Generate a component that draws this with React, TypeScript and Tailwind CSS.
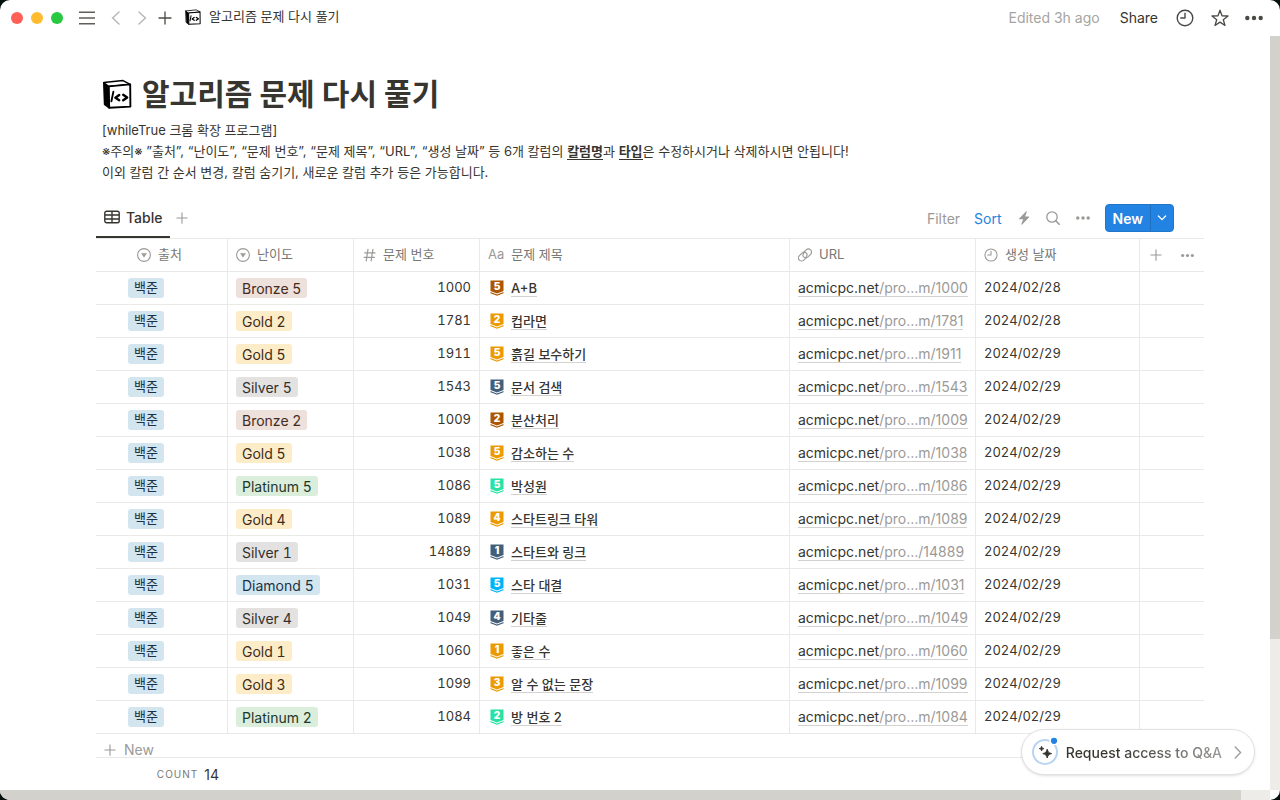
import type { ReactNode } from "react";

type Tier = "Bronze" | "Silver" | "Gold" | "Platinum" | "Diamond";

interface Problem {
  tier: Tier;
  level: number;
  id: number;
  title: string;
  date: string;
}

const problems: Problem[] = [
  { tier: "Bronze", level: 5, id: 1000, title: "A+B", date: "2024/02/28" },
  { tier: "Gold", level: 2, id: 1781, title: "컵라면", date: "2024/02/28" },
  { tier: "Gold", level: 5, id: 1911, title: "흙길 보수하기", date: "2024/02/29" },
  { tier: "Silver", level: 5, id: 1543, title: "문서 검색", date: "2024/02/29" },
  { tier: "Bronze", level: 2, id: 1009, title: "분산처리", date: "2024/02/29" },
  { tier: "Gold", level: 5, id: 1038, title: "감소하는 수", date: "2024/02/29" },
  { tier: "Platinum", level: 5, id: 1086, title: "박성원", date: "2024/02/29" },
  { tier: "Gold", level: 4, id: 1089, title: "스타트링크 타워", date: "2024/02/29" },
  { tier: "Silver", level: 1, id: 14889, title: "스타트와 링크", date: "2024/02/29" },
  { tier: "Diamond", level: 5, id: 1031, title: "스타 대결", date: "2024/02/29" },
  { tier: "Silver", level: 4, id: 1049, title: "기타줄", date: "2024/02/29" },
  { tier: "Gold", level: 1, id: 1060, title: "좋은 수", date: "2024/02/29" },
  { tier: "Gold", level: 3, id: 1099, title: "알 수 없는 문장", date: "2024/02/29" },
  { tier: "Platinum", level: 2, id: 1084, title: "방 번호 2", date: "2024/02/29" },
];

const tagStyles: Record<Tier, string> = {
  Bronze: "bg-[#eee0da] text-[#442a1e]",
  Silver: "bg-[#e3e2e0] text-[#32302c]",
  Gold: "bg-[#fdecc8] text-[#402c1b]",
  Platinum: "bg-[#dbeddb] text-[#1c3829]",
  Diamond: "bg-[#d3e5ef] text-[#183347]",
};

const tierColors: Record<Tier, string> = {
  Bronze: "#ad5600",
  Silver: "#435f7a",
  Gold: "#ec9a00",
  Platinum: "#27e2a4",
  Diamond: "#00b4fc",
};

function Tag({ className, children }: { className: string; children: ReactNode }) {
  return <span className={`inline-flex h-5 items-center rounded-[3px] px-1.5 ${className}`}>{children}</span>;
}

function TierBadge({ tier, level }: { tier: Tier; level: number }) {
  const color = tierColors[tier];
  return (
    <svg width="14" height="16" viewBox="0 0 14 16" className="shrink-0" aria-hidden="true">
      <path d="M.5.5h13v10.6L7 13.6.5 11.1Z" fill={color} />
      <path d="M.5 12 7 14.6l6.5-2.6v1.2L7 15.8.5 13.2Z" fill={color} />
      <text x="7" y="10.2" textAnchor="middle" fontSize="10" fontWeight="900" fill="#fff" className="font-['Inter',sans-serif]">
        {level}
      </text>
    </svg>
  );
}

function Plus({ size, className }: { size: number; className: string }) {
  return (
    <svg width={size} height={size} viewBox="0 0 14 14" className={className} fill="none" stroke="currentColor" strokeWidth="1.3" strokeLinecap="round" aria-hidden="true">
      <path d="M7 1v12M1 7h12" />
    </svg>
  );
}

function Dots({ size }: { size: number }) {
  return (
    <svg width={size} height={size} viewBox="0 0 18 18" fill="currentColor" aria-hidden="true">
      <circle cx="2.3" cy="9" r="2.2" />
      <circle cx="9" cy="9" r="2.2" />
      <circle cx="15.7" cy="9" r="2.2" />
    </svg>
  );
}

function Clock({ size }: { size: number }) {
  return (
    <svg width={size} height={size} viewBox="0 0 18 18" fill="none" stroke="currentColor" strokeWidth="1.4" aria-hidden="true">
      <circle cx="9" cy="9" r="7.8" />
      <path d="M9 4.2V9H4.8" strokeLinecap="round" strokeLinejoin="round" />
    </svg>
  );
}

function SelectIcon() {
  return (
    <svg width="14" height="14" viewBox="0 0 14 14" aria-hidden="true">
      <circle cx="7" cy="7" r="6.4" fill="none" stroke="currentColor" strokeWidth="1.1" />
      <path d="M4.5 5.4h5L7 9.3Z" fill="currentColor" stroke="currentColor" strokeWidth=".5" strokeLinejoin="round" />
    </svg>
  );
}

function HashIcon() {
  return (
    <svg width="14" height="14" viewBox="0 0 14 14" fill="none" stroke="currentColor" strokeWidth="1.2" strokeLinecap="round" aria-hidden="true">
      <path d="M6 1.4 4.2 12.8M10.9 1.4 9.1 12.8M2.7 4.9h10.4M2.1 9.3h10.4" />
    </svg>
  );
}

function LinkIcon() {
  return (
    <svg width="14" height="14" viewBox="0 0 14 14" fill="none" stroke="currentColor" strokeWidth="1.15" strokeLinecap="round" aria-hidden="true">
      <path d="M5.9 4.2 8.2 1.9a3.1 3.1 0 0 1 4.4 4.4L10 8.9a3.1 3.1 0 0 1-4.4 0 2.6 2.6 0 0 1 .2-3.5" />
      <path d="M8.1 9.8 5.8 12.1a3.1 3.1 0 0 1-4.4-4.4L4 5.1a3.1 3.1 0 0 1 4.4 0 2.6 2.6 0 0 1-.2 3.5" />
    </svg>
  );
}

function CodeCube({ size }: { size: number }) {
  return (
    <svg width={size} height={size} viewBox="0 0 30 30" className="shrink-0" fill="none" stroke="#000" strokeLinecap="round" strokeLinejoin="round" aria-hidden="true">
      <path d="M1.8 3.8 6.8 7.4 7.2 28.8 2.6 25.4Z" fill="#000" strokeWidth="1.6" />
      <path d="M1.8 3.6 21 1.6 28.2 5.4 6.8 7.6Z" fill="#fff" strokeWidth="1.5" />
      <path d="M6.8 7.4 28.2 5.4 28.4 27.6 7.2 28.8Z" fill="#fff" strokeWidth="1.9" />
      <path d="M11.4 12.6 9.4 22.2" strokeWidth="1.9" />
      <path d="m17.2 16-3.8 2.8 3.8 2.4M21.2 15.8l4 2.6-4 2.8" strokeWidth="2.4" />
    </svg>
  );
}

function TableIcon() {
  return (
    <svg width="16" height="14" viewBox="0 0 16 14" fill="none" stroke="currentColor" strokeWidth="1.4" aria-hidden="true">
      <rect x=".8" y="1.2" width="14.4" height="11.6" rx="1.8" />
      <path d="M1 5h14M1 9h14M8 1.5v11" />
    </svg>
  );
}

function TopBar() {
  return (
    <header className="flex h-9 shrink-0 items-center justify-between pl-[11px] pr-[17px] text-[14px]">
      <div className="flex items-center">
        <div className="flex gap-2" aria-hidden="true">
          <span className="size-3 rounded-full bg-[#ff5f57]" />
          <span className="size-3 rounded-full bg-[#febc2e]" />
          <span className="size-3 rounded-full bg-[#28c840]" />
        </div>
        <button type="button" aria-label="Menu" className="ml-4 text-[#5f5e5b]">
          <svg width="16" height="14" viewBox="0 0 16 14" stroke="currentColor" strokeWidth="1.5" aria-hidden="true">
            <path d="M0 1.2h16M0 7h16M0 12.8h16" />
          </svg>
        </button>
        <button type="button" aria-label="Back" className="ml-4 text-[#b9b8b6]">
          <svg width="10" height="14" viewBox="0 0 10 14" fill="none" stroke="currentColor" strokeWidth="1.5" strokeLinecap="round" aria-hidden="true">
            <path d="M8 1 1.6 7 8 13" />
          </svg>
        </button>
        <button type="button" aria-label="Forward" className="ml-4 text-[#b9b8b6]">
          <svg width="10" height="14" viewBox="0 0 10 14" fill="none" stroke="currentColor" strokeWidth="1.5" strokeLinecap="round" aria-hidden="true">
            <path d="M2 1l6.4 6L2 13" />
          </svg>
        </button>
        <button type="button" aria-label="New tab" className="ml-[11px]">
          <Plus size={14} className="text-[#4a4946]" />
        </button>
        <a href="#page" className="ml-[13px] flex items-center gap-2 pb-0.5 text-[13px]">
          <CodeCube size={16} />
          알고리즘 문제 다시 풀기
        </a>
      </div>
      <div className="flex items-center">
        <span className="pb-0.5 text-[#a5a4a1]">Edited 3h ago</span>
        <button type="button" className="ml-5 pb-0.5">Share</button>
        <button type="button" aria-label="Updates" className="ml-[18px] text-[#4a4946]">
          <Clock size={18} />
        </button>
        <button type="button" aria-label="Favorite" className="ml-[17px] text-[#4a4946]">
          <svg width="18" height="18" viewBox="0 0 18 18" fill="none" stroke="currentColor" strokeWidth="1.3" strokeLinejoin="round" aria-hidden="true">
            <path d="m9 1.2 2 5.6 6 .2-4.7 3.7 1.7 5.8L9 13.1l-5 3.4 1.7-5.8L1 7l6-.2Z" />
          </svg>
        </button>
        <button type="button" aria-label="More" className="ml-4 text-[#4a4946]">
          <Dots size={18} />
        </button>
      </div>
    </header>
  );
}

function Heading({ icon, label, indent = "pl-2" }: { icon: ReactNode; label: string; indent?: string }) {
  return (
    <th scope="col" className={`border-b border-r border-[#e9e9e7] pr-2 font-normal ${indent}`}>
      <div className="flex items-center gap-[7px] text-[#9b9a97]">
        {icon}
        <span className="text-[#787774]">{label}</span>
      </div>
    </th>
  );
}

function ProblemTable() {
  return (
    <table className="w-[1108px] table-fixed border-separate border-spacing-0 text-left text-[14px]">
      <colgroup>
        <col className="w-[132px]" />
        <col className="w-[126px]" />
        <col className="w-[126px]" />
        <col className="w-[310px]" />
        <col className="w-[186px]" />
        <col className="w-[164px]" />
        <col className="w-16" />
      </colgroup>
      <thead>
        <tr className="h-[33px] text-[13px]">
          <Heading icon={<SelectIcon />} label="출처" indent="pl-[41px]" />
          <Heading icon={<SelectIcon />} label="난이도" />
          <Heading icon={<HashIcon />} label="문제 번호" />
          <Heading icon={<span>Aa</span>} label="문제 제목" />
          <Heading icon={<LinkIcon />} label="URL" />
          <Heading icon={<Clock size={14} />} label="생성 날짜" />
          <th scope="col" className="border-b border-[#e9e9e7] font-normal text-[#9b9a97]">
            <div className="flex items-center justify-between px-2.5">
              <button type="button" aria-label="Add column"><Plus size={12} className="" /></button>
              <button type="button" aria-label="Column options"><Dots size={13} /></button>
            </div>
          </th>
        </tr>
      </thead>
      <tbody>
        {problems.map((p) => (
          <tr key={p.id} className="h-[33px]">
            <td className="border-b border-r border-[#e9e9e7] pl-8 text-[13px]">
              <div className="flex"><Tag className="bg-[#d3e5ef] text-[#183347]">백준</Tag></div>
            </td>
            <td className="border-b border-r border-[#e9e9e7] pl-2 tabular-nums">
              <div className="flex"><Tag className={tagStyles[p.tier]}>{p.tier} {p.level}</Tag></div>
            </td>
            <td className="border-b border-r border-[#e9e9e7] pr-2 text-right text-[13px] tabular-nums">{p.id}</td>
            <td className="border-b border-r border-[#e9e9e7] pl-2.5 text-[13px] font-medium">
              <div className="flex items-center gap-[7px]">
                <TierBadge tier={p.tier} level={p.level} />
                <a href={`#problem-${p.id}`} className="border-b border-[#d3d2d0] leading-4">{p.title}</a>
              </div>
            </td>
            <td className="border-b border-r border-[#e9e9e7] pl-2">
              <div className="flex">
                <a href={`#url-${p.id}`} className="whitespace-nowrap border-b border-[#d3d2d0] leading-4">
                  acmicpc.net<span className="text-[#9b9a97]">{p.id > 9999 ? `/pro…/${p.id}` : `/pro…m/${p.id}`}</span>
                </a>
              </div>
            </td>
            <td className="border-b border-r border-[#e9e9e7] pl-2 text-[13px] tabular-nums">{p.date}</td>
            <td className="border-b border-[#e9e9e7]" />
          </tr>
        ))}
      </tbody>
    </table>
  );
}

function ViewBar() {
  return (
    <div className="flex h-10 items-stretch justify-between text-[14px]">
      <div className="flex items-center">
        <button type="button" className="flex items-center gap-1.5 self-stretch border-b-2 border-[#37352f] px-2 font-medium">
          <TableIcon />
          Table
        </button>
        <button type="button" aria-label="Add view" className="ml-1.5">
          <Plus size={12} className="text-[#9b9a97]" />
        </button>
      </div>
      <div className="flex items-center text-[#9b9a97]">
        <button type="button">Filter</button>
        <button type="button" className="ml-3.5 text-[#2383e2]">Sort</button>
        <button type="button" aria-label="Automations" className="ml-4">
          <svg width="12" height="14" viewBox="0 0 12 14" fill="currentColor" aria-hidden="true">
            <path d="M8 .4 1.2 7.4c-.4.4-.2.9.4.9h3.5L3.4 13c-.2.6.3.9.8.4l6.7-7c.4-.4.2-.9-.4-.9H7.1L8.8.9C9 .3 8.5 0 8 .4Z" />
          </svg>
        </button>
        <button type="button" aria-label="Search" className="ml-4">
          <svg width="14" height="14" viewBox="0 0 14 14" fill="none" stroke="currentColor" strokeWidth="1.3" strokeLinecap="round" aria-hidden="true">
            <circle cx="6" cy="6" r="5.2" />
            <path d="m9.8 9.8 3.4 3.4" strokeWidth="1.6" />
          </svg>
        </button>
        <button type="button" aria-label="View options" className="ml-4">
          <Dots size={14} />
        </button>
        <div className="ml-[15px] flex h-7 overflow-hidden rounded-[4px] border border-[#1f76cb] bg-[#2383e2] text-white">
          <button type="button" className="px-[7px] font-semibold">New</button>
          <button type="button" aria-label="New options" className="flex w-[23px] items-center justify-center border-l border-[#1f70c1]">
            <svg width="10" height="6" viewBox="0 0 10 6" fill="none" stroke="currentColor" strokeWidth="1.3" strokeLinecap="round" strokeLinejoin="round" aria-hidden="true">
              <path d="m1.4 1 3.6 3.6L8.6 1" />
            </svg>
          </button>
        </div>
      </div>
    </div>
  );
}

export default function App() {
  return (
    <div className="h-screen bg-[#04110d]">
      <div className="relative flex h-full flex-col overflow-hidden rounded-[10px] bg-white font-['Inter','Noto_Sans_CJK_KR',sans-serif] text-[#37352f]">
        <TopBar />
        <div className="flex min-h-0 flex-1">
          <main id="page" className="flex min-w-0 flex-1 flex-col overflow-hidden pl-24">
            <div className="mt-10 flex items-center gap-2.5 pl-1.5">
              <CodeCube size={30} />
              <h1 className="text-[30px] font-bold leading-9">알고리즘 문제 다시 풀기</h1>
            </div>
            <p className="mt-2 pl-1.5 text-[13px] leading-[21px]">
              [whileTrue 크롬 확장 프로그램]
              <br />
              ※주의※ ”출처”, “난이도”, “문제 번호”, “문제 제목”, “URL”, “생성 날짜” 등 6개 칼럼의{" "}
              <strong className="border-b border-[#37352f] font-bold">칼럼명</strong>과{" "}
              <strong className="border-b border-[#37352f] font-bold">타입</strong>은 수정하시거나 삭제하시면 안됩니다!
              <br />
              이외 칼럼 간 순서 변경, 칼럼 숨기기, 새로운 칼럼 추가 등은 가능합니다.
            </p>
            <section className="mt-[15px] flex min-h-0 flex-1 flex-col">
              <div className="mr-24">
                <ViewBar />
              </div>
              <div className="mr-[66px] min-h-0 flex-1 overflow-hidden border-t border-[#e9e9e7]">
                <ProblemTable />
                <button type="button" className="flex h-[23px] items-center gap-2 pl-2 pt-[9px] text-[14px] leading-[14px] text-[#9b9a97]">
                  <Plus size={12} className="" />
                  New
                </button>
              </div>
              <div className="mr-[66px] flex h-[33px] shrink-0 items-center border-t border-[#e9e9e7]">
                <div className="flex w-[131px] items-center justify-end gap-1.5 pr-2">
                  <span className="text-[10px] uppercase tracking-widest text-[#787774]">Count</span>
                  <span className="text-[14px]">14</span>
                </div>
              </div>
            </section>
          </main>
          <div className="w-2.5 shrink-0 bg-[#edece9]" aria-hidden="true">
            <div className="h-4/5 bg-[#d3d1cb]" />
          </div>
        </div>
        <div className="mr-2.5 h-2.5 shrink-0 bg-[#edece9] pr-[29px]" aria-hidden="true">
          <div className="h-full bg-[#d3d1cb]" />
        </div>
        <button type="button" className="absolute bottom-[25px] right-[25px] flex h-[46px] items-center rounded-full border border-[#e3e2e0] bg-white pl-2.5 pr-3 text-[14px] shadow-sm">
          <svg width="28" height="30" viewBox="0 0 28 30" fill="none" aria-hidden="true">
            <circle cx="13" cy="15" r="12" stroke="#b9d3f3" strokeWidth="2" />
            <circle cx="22" cy="3.8" r="4.6" fill="#fff" />
            <circle cx="22" cy="3.8" r="3.1" fill="#2383e2" />
            <path d="M15.2 12.2c.7 2.9 1.5 3.7 4.4 4.4-2.9.7-3.7 1.5-4.4 4.4-.7-2.9-1.5-3.7-4.4-4.4 2.9-.7 3.7-1.5 4.4-4.4Z" fill="#37352f" stroke="#37352f" />
            <path d="M9.6 9.2c.4 1.6.8 2 2.4 2.4-1.6.4-2 .8-2.4 2.4-.4-1.6-.8-2-2.4-2.4 1.6-.4 2-.8 2.4-2.4Z" fill="#37352f" stroke="#37352f" strokeWidth=".8" />
          </svg>
          <span className="ml-1.5 bg-linear-to-r from-[#37352f] from-30% to-[#9b9a97] bg-clip-text font-medium text-transparent">Request access to Q&amp;A</span>
          <svg width="8" height="13" viewBox="0 0 8 13" className="ml-3" fill="none" stroke="#9b9a97" strokeWidth="1.3" strokeLinecap="round" aria-hidden="true">
            <path d="m1.2 1 5.4 5.5L1.2 12" />
          </svg>
        </button>
      </div>
    </div>
  );
}
